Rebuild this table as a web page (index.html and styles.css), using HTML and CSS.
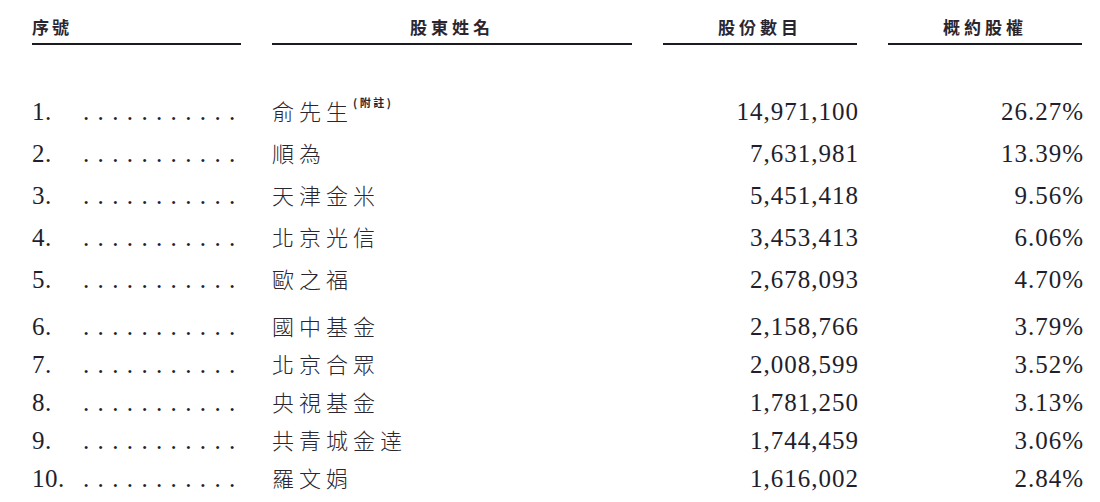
FILE: index.html
```html
<!DOCTYPE html>
<html lang="zh-Hant">
<head>
<meta charset="utf-8">
<title>股東</title>
<link rel="stylesheet" href="styles.css">
</head>
<body>
<div class="sheet">
  <div class="head">
    <div class="hcell left">序號</div>
    <div class="hcell wide">股東姓名</div>
    <div class="hcell">股份數目</div>
    <div class="hcell">概約股權</div>
  </div>
  <div class="group group-a">
    <div class="row"><div class="seq"><span class="no">1.</span><span class="dots">...........</span></div><div class="name">俞先生<span class="note">(附註)</span></div><div class="num">14,971,100</div><div class="num">26.27%</div></div>
    <div class="row"><div class="seq"><span class="no">2.</span><span class="dots">...........</span></div><div class="name">順為</div><div class="num">7,631,981</div><div class="num">13.39%</div></div>
    <div class="row"><div class="seq"><span class="no">3.</span><span class="dots">...........</span></div><div class="name">天津金米</div><div class="num">5,451,418</div><div class="num">9.56%</div></div>
    <div class="row"><div class="seq"><span class="no">4.</span><span class="dots">...........</span></div><div class="name">北京光信</div><div class="num">3,453,413</div><div class="num">6.06%</div></div>
    <div class="row"><div class="seq"><span class="no">5.</span><span class="dots">...........</span></div><div class="name">歐之福</div><div class="num">2,678,093</div><div class="num">4.70%</div></div>
  </div>
  <div class="group group-b">
    <div class="row"><div class="seq"><span class="no">6.</span><span class="dots">...........</span></div><div class="name">國中基金</div><div class="num">2,158,766</div><div class="num">3.79%</div></div>
    <div class="row"><div class="seq"><span class="no">7.</span><span class="dots">...........</span></div><div class="name">北京合眾</div><div class="num">2,008,599</div><div class="num">3.52%</div></div>
    <div class="row"><div class="seq"><span class="no">8.</span><span class="dots">...........</span></div><div class="name">央視基金</div><div class="num">1,781,250</div><div class="num">3.13%</div></div>
    <div class="row"><div class="seq"><span class="no">9.</span><span class="dots">...........</span></div><div class="name">共青城金逹</div><div class="num">1,744,459</div><div class="num">3.06%</div></div>
    <div class="row"><div class="seq"><span class="no">10.</span><span class="dots">...........</span></div><div class="name">羅文娟</div><div class="num">1,616,002</div><div class="num">2.84%</div></div>
  </div>
</div>
</body>
</html>
```
FILE: styles.css
```css
html, body {
  margin: 0;
  padding: 0;
  background: #ffffff;
}
.sheet {
  width: 1100px;
  height: 502px;
  box-sizing: border-box;
  padding: 15px 0 0 32px;
  color: #221e2c;
  overflow: hidden;
}
.head, .row {
  display: grid;
  grid-template-columns: 209px 360px 194px 194px;
  column-gap: 31px;
}
.hcell {
  font-family: "Noto Sans CJK TC", "Noto Sans CJK SC", sans-serif;
  font-size: 17px;
  font-weight: 700;
  line-height: 24px;
  letter-spacing: 4px;
  text-align: center;
  padding-bottom: 4px;
  border-bottom: 2px solid #1c1a22;
  color: #2a2630;
}
.hcell.left {
  text-align: left;
  letter-spacing: 3px;
}
.group-a {
  margin-top: 44px;
}
.group-a .row {
  height: 42px;
  line-height: 42px;
}
.group-b {
  margin-top: 7px;
}
.group-b .row {
  height: 38px;
  line-height: 38px;
}
.row {
  align-items: baseline;
  font-family: "Liberation Serif", "Times New Roman", serif;
  font-size: 25px;
}
.seq {
  white-space: nowrap;
}
.no {
  display: inline-block;
  width: 51px;
  letter-spacing: 0.5px;
}
.dots {
  letter-spacing: 8.35px;
}
.name {
  font-family: "Noto Sans CJK TC", "Noto Sans CJK SC", sans-serif;
  font-size: 22px;
  font-weight: 300;
  letter-spacing: 5px;
  color: #2a2630;
}
.note {
  font-size: 11px;
  font-weight: 700;
  letter-spacing: 2.5px;
  line-height: 0;
  vertical-align: 13px;
}
.num {
  text-align: right;
  letter-spacing: 1px;
  margin-right: -2px;
}
```
